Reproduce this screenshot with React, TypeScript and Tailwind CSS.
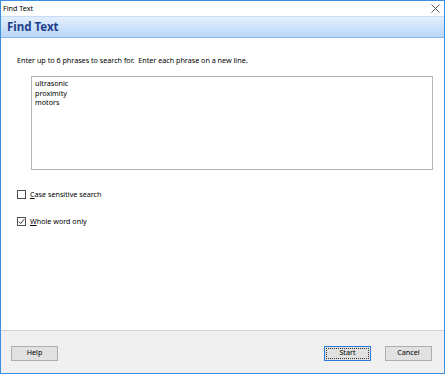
import { useState } from 'react'

export default function App() {
  const [phrases, setPhrases] = useState('ultrasonic\nproximity\nmotors')
  const [caseSensitive, setCaseSensitive] = useState(false)
  const [wholeWord, setWholeWord] = useState(true)

  return (
    <div
      className="w-[445px] h-[374px] flex flex-col border border-[#3a8fe0] bg-white text-black overflow-hidden"
      style={{ fontFamily: '"Noto Sans", "Open Sans", sans-serif' }}
    >
      {/* title bar */}
      <div className="h-[15px] flex items-center justify-between pl-[2px] pr-[4px] bg-white">
        <span className="text-[7.2px] leading-none">Find Text</span>
        <svg width="9" height="9" viewBox="0 0 9 9" className="text-[#555]">
          <path d="M0.5 0.5 L8.5 8.5 M8.5 0.5 L0.5 8.5" stroke="currentColor" strokeWidth="1" />
        </svg>
      </div>

      {/* header band */}
      <div className="h-[22px] flex items-center px-[6px] bg-gradient-to-b from-[#e3effd] to-[#b9d6f8] border-t border-[#c7dcf6] border-b border-b-[#8db6ea]">
        <span className="text-[11.5px] font-bold text-[#1e3e8c] leading-none">Find Text</span>
      </div>

      {/* body */}
      <div className="flex-1 flex flex-col pl-[16px] pr-[11px] pt-[17px]">
        <p className="text-[7.2px] leading-[10px]">
          Enter up to 6 phrases to search for.&nbsp; Enter each phrase on a new line.
        </p>
        <textarea
          value={phrases}
          onChange={e => setPhrases(e.target.value)}
          className="ml-[14px] mt-[11px] h-[94px] resize-none border border-[#b4b4b4] px-[3px] pt-[2px] text-[7.2px] leading-[9.5px] outline-none"
        />

        <label className="mt-[20px] flex items-center gap-[4px] text-[7.2px] leading-none">
          <input
            type="checkbox"
            checked={caseSensitive}
            onChange={e => setCaseSensitive(e.target.checked)}
            className="sr-only"
          />
          <span className="w-[9px] h-[9px] border border-[#4d4d4d] bg-white flex items-center justify-center">
            {caseSensitive && (
              <svg width="7" height="7" viewBox="0 0 7 7">
                <path d="M0.8 3.6 L2.7 5.5 L6.2 1.2" fill="none" stroke="#333" strokeWidth="1" />
              </svg>
            )}
          </span>
          <span><u>C</u>ase sensitive search</span>
        </label>

        <label className="mt-[18px] flex items-center gap-[4px] text-[7.2px] leading-none">
          <input
            type="checkbox"
            checked={wholeWord}
            onChange={e => setWholeWord(e.target.checked)}
            className="sr-only"
          />
          <span className="w-[9px] h-[9px] border border-[#4d4d4d] bg-white flex items-center justify-center">
            {wholeWord && (
              <svg width="7" height="7" viewBox="0 0 7 7">
                <path d="M0.8 3.6 L2.7 5.5 L6.2 1.2" fill="none" stroke="#333" strokeWidth="1" />
              </svg>
            )}
          </span>
          <span><u>W</u>hole word only</span>
        </label>
      </div>

      {/* footer */}
      <div className="h-[43px] shrink-0 bg-[#f0f0f0] border-t border-[#d4d4d4] flex items-center justify-between pl-[10px] pr-[12px] pt-[2px]">
        <button className="w-[47px] h-[15px] bg-[#e1e1e1] border border-[#adadad] text-[7.2px] leading-none">
          Help
        </button>
        <div className="flex gap-[14px]">
          <button className="w-[47px] h-[15px] bg-[#e1e1e1] border border-[#2a7ad6] outline outline-1 outline-dotted outline-offset-[-3px] outline-[#333] text-[7.2px] leading-none">
            Start
          </button>
          <button className="w-[47px] h-[15px] bg-[#e1e1e1] border border-[#adadad] text-[7.2px] leading-none">
            Cancel
          </button>
        </div>
      </div>
    </div>
  )
}
